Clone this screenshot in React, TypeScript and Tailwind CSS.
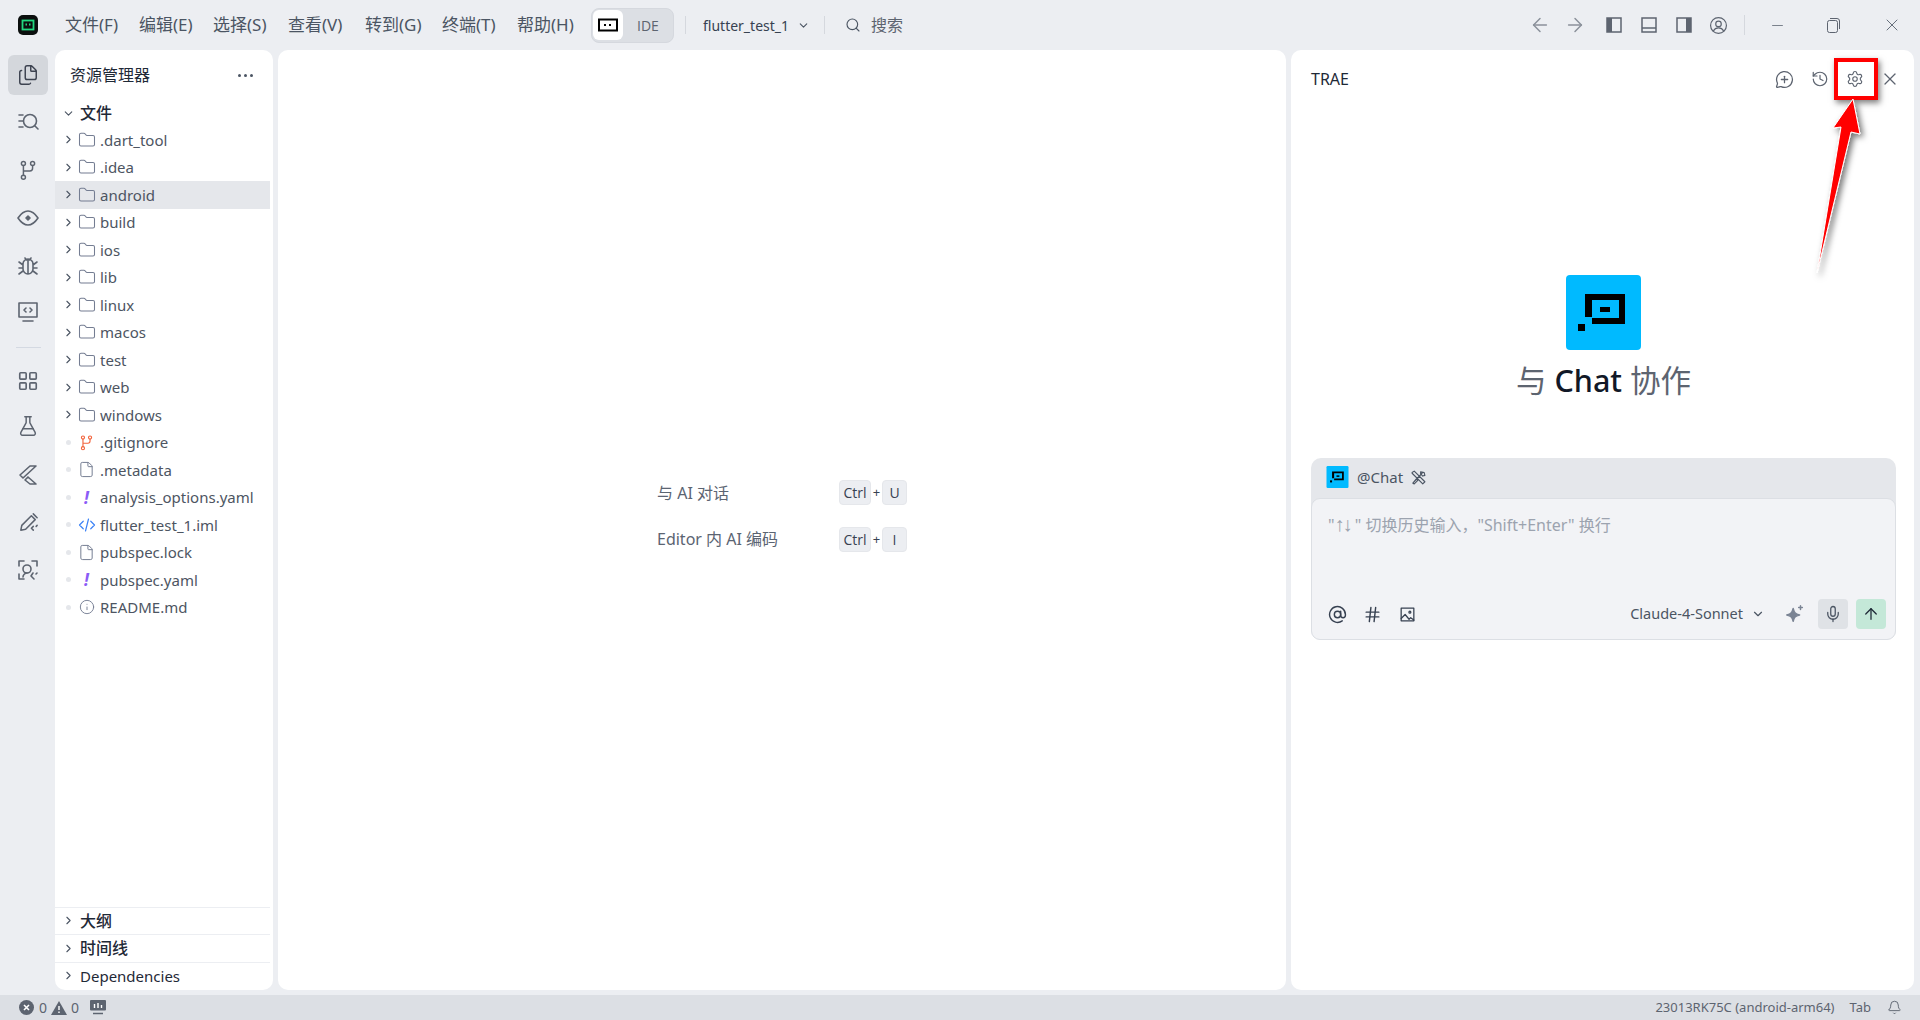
import {
  ArrowLeft,
  ArrowRight,
  ArrowUp,
  AtSign,
  Bell,
  ChevronDown,
  ChevronRight,
  File,
  Files,
  FlaskConical,
  Folder,
  Hash,
  History,
  Info,
  LayoutGrid,
  MessageCirclePlus,
  Mic,
  Minus,
  Search,
  Settings,
  X,
} from 'lucide-react';
import type { ReactNode } from 'react';

const FONT = { fontFamily: '"Noto Sans", "Noto Sans CJK SC", sans-serif' };

const menus = [
  { label: '文件(F)', w: 'w-[74px]' },
  { label: '编辑(E)', w: 'w-[74px]' },
  { label: '选择(S)', w: 'w-[75px]' },
  { label: '查看(V)', w: 'w-[77px]' },
  { label: '转到(G)', w: 'w-[77px]' },
  { label: '终端(T)', w: 'w-[75px]' },
  { label: '帮助(H)', w: 'w-[74px]' },
];
const folders = ['.dart_tool', '.idea', 'android', 'build', 'ios', 'lib', 'linux', 'macos', 'test', 'web', 'windows'];

function Svg({ size = 20, children, stroke = 1.6 }: { size?: number; children: ReactNode; stroke?: number }) {
  return (
    <svg width={size} height={size} viewBox="0 0 24 24" fill="none" stroke="currentColor" strokeWidth={stroke} strokeLinecap="round" strokeLinejoin="round">
      {children}
    </svg>
  );
}

// trae mark, drawn on the 75 unit grid of the big logo
function TraeLogo({ w, h }: { w: number; h: number }) {
  return (
    <svg width={w} height={h} viewBox="0 0 75 75">
      <rect width="75" height="75" rx="4" fill="#00baff" />
      <path d="M19 19h40v30H26v-6h27V25H26v17h-7z" fill="#000" />
      <rect x="34" y="32" width="10" height="5" fill="#000" />
      <rect x="12" y="49" width="7" height="7" fill="#000" />
    </svg>
  );
}

function ActivityBar() {
  const c = 'flex h-10 w-10 items-center justify-center rounded-md text-[#5d6470]';
  return (
    <div className="flex w-[55px] shrink-0 flex-col items-center pt-[5px] pl-[1px]">
      <div className={`${c} bg-[#d4d7dc]`}>
        <Files size={22} strokeWidth={1.6} className="text-[#3d4350]" />
      </div>
      <div className={`${c} mt-[7px]`}>
        <Svg size={24}>
          <circle cx="14" cy="11" r="6.5" />
          <path d="M19 16l3 3M3 5h4M3 11h4M3 17h4" />
        </Svg>
      </div>
      <div className={`${c} mt-[8px]`}>
        <Svg size={22}>
          <circle cx="7" cy="5" r="2.2" />
          <circle cx="17" cy="5" r="2.2" />
          <circle cx="7" cy="20" r="2.2" />
          <path d="M7 7v11M17 7v3a3 3 0 0 1-3 3H7" />
        </Svg>
      </div>
      <div className={`${c} mt-[8px]`}>
        <Svg size={24}>
          <path d="M2 12c3-4.5 6-7 10-7s7 2.500 10 7c-3 4.500-6 7-10 7s-7-2.500-10-7z" />
          <path d="M12 10l2 2-2 2-2-2z" fill="currentColor" />
        </Svg>
      </div>
      <div className={`${c} mt-[7px]`}>
        <Svg size={24}>
          <path d="M7 11a5 5 0 0 1 10 0v5a5 5 0 0 1-10 0zM12 7v14M9 5l1.500 2M15 5l-1.500 2M3 9l4 3M21 9l-4 3M3 15h4M21 15h-4M3 21l4-3M21 21l-4-3" />
        </Svg>
      </div>
      <div className={`${c} mt-[7px]`}>
        <Svg size={24}>
          <rect x="3" y="3" width="18" height="14" />
          <path d="M10 8l-2 2 2 2M14 8l2 2-2 2M7 21h10" />
        </Svg>
      </div>
      <div className="mt-[15px] h-px w-[25px] bg-[#d4d9e2]" />
      <div className={`${c} mt-[13px]`}>
        <LayoutGrid size={22} strokeWidth={1.8} />
      </div>
      <div className={`${c} mt-[5px]`}>
        <FlaskConical size={22} strokeWidth={1.6} />
      </div>
      <div className={`${c} mt-[9px]`}>
        <Svg size={24}>
          <path d="M14 3h6L7 15l-3-3zM20 21h-6l-5-4 3-3zM12 14l8 7" />
        </Svg>
      </div>
      <div className={`${c} mt-[7px]`}>
        <Svg size={23}>
          <path d="M4 20l1-5L15 5l4 4L9 19zM17 3l4 4M17 16l-2 2 2 2M21 15l-1 1" />
        </Svg>
      </div>
      <div className={`${c} mt-[8px]`}>
        <Svg size={24}>
          <path d="M3 8V3h5M16 3h5v5M3 16v5h5" />
          <circle cx="11" cy="11" r="4" />
          <path d="M7 19c0-2 2-4 4-4M17 15l-2 3 3 3M21 15l-1 1" />
        </Svg>
      </div>
    </div>
  );
}

function Row({ active, chevron = true, icon, name }: { active?: boolean; chevron?: boolean; icon: ReactNode; name: string }) {
  return (
    <div className={`mr-[3px] flex h-[27.5px] items-center pl-[5px] ${active ? 'bg-[#e5e7eb]' : ''}`}>
      <div className="flex w-[16px] justify-center">
        {chevron ? <ChevronRight size={13} strokeWidth={2} className="text-[#4b5563]" /> : <div className="h-[5px] w-[5px] rounded-full bg-[#e5e7eb]" />}
      </div>
      <div className="ml-[1.5px] flex w-[18px] justify-center">{icon}</div>
      <span className="ml-[4.5px] text-[15px] text-[#4d5562]">{name}</span>
    </div>
  );
}

function Explorer() {
  const fileIcon = <File size={17} strokeWidth={1.4} className="text-[#747d92]" />;
  const yaml = <span className="text-[17px] font-bold italic text-[#8b5cf6]">!</span>;
  return (
    <div className="flex w-[218px] shrink-0 flex-col rounded-[10px] bg-white pb-[1px]">
      <div className="flex h-[50px] shrink-0 items-center justify-between pl-[15px] pr-[20px]">
        <span className="text-[16px] text-[#1f2937]">资源管理器</span>
        <div className="flex gap-[3px]">
          <div className="h-[3px] w-[3px] rounded-full bg-[#4b5563]" />
          <div className="h-[3px] w-[3px] rounded-full bg-[#4b5563]" />
          <div className="h-[3px] w-[3px] rounded-full bg-[#4b5563]" />
        </div>
      </div>
      <div className="flex h-[26px] shrink-0 items-center pl-[5px]">
        <div className="flex w-[16px] justify-center">
          <ChevronDown size={13} strokeWidth={2} className="text-[#4b5563]" />
        </div>
        <span className="ml-[4px] text-[16px] font-medium text-[#1f2937]">文件</span>
      </div>
      <div className="flex-1">
        {folders.map(f => (
          <Row key={f} name={f} active={f === 'android'} icon={<Folder size={18} strokeWidth={1.4} className="text-[#747d92]" />} />
        ))}
        <Row
          chevron={false}
          name=".gitignore"
          icon={
            <span className="text-[#f2643d]">
              <Svg size={17}>
                <circle cx="7" cy="5" r="2.200" />
                <circle cx="17" cy="5" r="2.200" />
                <circle cx="7" cy="20" r="2.200" />
                <path d="M7 7v11M17 7v3a3 3 0 0 1-3 3H7" />
              </Svg>
            </span>
          }
        />
        <Row chevron={false} name=".metadata" icon={fileIcon} />
        <Row chevron={false} name="analysis_options.yaml" icon={yaml} />
        <Row
          chevron={false}
          name="flutter_test_1.iml"
          icon={
            <span className="text-[#3b82f6]">
              <Svg size={18}>
                <path d="M7 7l-5 5 5 5M17 7l5 5-5 5M14 4l-4 16" />
              </Svg>
            </span>
          }
        />
        <Row chevron={false} name="pubspec.lock" icon={fileIcon} />
        <Row chevron={false} name="pubspec.yaml" icon={yaml} />
        <Row chevron={false} name="README.md" icon={<Info size={16} strokeWidth={1.4} className="text-[#747d92]" />} />
      </div>
      {['大纲', '时间线', 'Dependencies'].map(s => (
        <div key={s} className="mr-[3px] flex h-[27.5px] shrink-0 items-center border-t border-[#eceef2] pl-[5px]">
          <div className="flex w-[16px] justify-center">
            <ChevronRight size={13} strokeWidth={2} className="text-[#4b5563]" />
          </div>
          <span className={`ml-[4px] text-[#1f2937] ${s === 'Dependencies' ? 'text-[15px]' : 'text-[16px] font-medium'}`}>{s}</span>
        </div>
      ))}
    </div>
  );
}

function Kbd({ children, wide }: { children: ReactNode; wide?: boolean }) {
  return (
    <span className={`flex h-[25px] items-center justify-center rounded-[4px] border border-[#e5e7eb] bg-[#eceef2] font-['Open_Sans'] text-[14px] font-medium text-[#374151] ${wide ? 'w-[32px]' : 'w-[25px]'}`}>
      {children}
    </span>
  );
}

function Hint({ label, k }: { label: string; k: string }) {
  return (
    <div className="flex items-center justify-between">
      <span className="text-[16px] text-[#5b6472]">{label}</span>
      <div className="flex items-center">
        <Kbd wide>Ctrl</Kbd>
        <span className="w-[11px] text-center text-[13px] text-[#374151]">+</span>
        <Kbd>{k}</Kbd>
      </div>
    </div>
  );
}

function ChatPanel() {
  return (
    <div className="relative w-[623px] shrink-0 rounded-[10px] bg-white">
      <div className="flex h-[58px] items-center justify-between pl-[20px] pr-[7px] text-[#5d6470]">
        <span className="text-[16px] text-[#1f2937]">TRAE</span>
        <div className="flex items-center">
          <div className="flex w-[35px] justify-center">
            <MessageCirclePlus size={19} strokeWidth={1.6} />
          </div>
          <div className="flex w-[35px] justify-center">
            <History size={18} strokeWidth={1.6} />
          </div>
          <div className="flex w-[35px] justify-center">
            <Settings size={18} strokeWidth={1.5} />
          </div>
          <div className="flex w-[35px] justify-center">
            <X size={20} strokeWidth={1.5} />
          </div>
        </div>
      </div>

      <div className="ml-[20px] flex w-[585px] flex-col items-center">
        <div className="mt-[167px]">
          <TraeLogo w={75} h={75} />
        </div>
        <div className="mt-[10px] text-[30.5px] leading-[40px] text-[#5d6470]">
          与 <span className="font-medium text-[#111827]">Chat</span> 协作
        </div>

        <div className="mt-[58px] w-full rounded-[10px] bg-[#e5e7eb]">
          <div className="flex h-[40px] items-center pb-[2px] pl-[15px]">
            <TraeLogo w={23} h={22} />
            <span className="ml-[8px] text-[15px] text-[#4b5563]">@Chat</span>
            <span className="ml-[7px] text-[#4b5563]">
              <Svg size={17}>
                <path d="M4 20L17 6M3 5l3-2 15 15-3 3L3 6zM15 4l5 1 1 4-3 1-3-3zM4 20l2 1 5-5-2-2z" />
              </Svg>
            </span>
          </div>
          <div className="flex h-[142px] flex-col rounded-[9px] border border-[#dcdfe4] bg-[#f2f3f6]">
            <div className="pl-[16px] pt-[15px] text-[16px] leading-[20px] text-[#9ca3af]">
              "<span className="font-['Liberation_Sans'] text-[20px] leading-[20px] tracking-[-2px]">↑↓</span>&nbsp;" 切换历史输入，"Shift+Enter" 换行
            </div>
            <div className="mt-auto flex items-center pb-[10px] pl-[16px] pr-[9px] text-[#374151]">
              <AtSign size={19} strokeWidth={1.8} />
              <Hash size={19} strokeWidth={1.8} className="ml-[16px]" />
              <div className="ml-[16px]">
                <Svg size={19}>
                  <rect x="4" y="4" width="16" height="16" />
                  <circle cx="15" cy="9" r="1.200" />
                  <path d="M4 17l5-5 5 6 2-2 4 3" />
                </Svg>
              </div>
              <span className="ml-auto text-[14.5px] text-[#4b5563]">Claude-4-Sonnet</span>
              <ChevronDown size={14} strokeWidth={2} className="ml-[8px] text-[#4b5563]" />
              <span className="ml-[19px] mr-[12px] text-[#7b8494]">
                <Svg size={22}>
                  <path d="M10 6c1 4 2 6 7 7-5 1-6 3-7 7-1-4-2-6-7-7 5-1 6-3 7-7z" fill="currentColor" />
                  <path d="M18 3v4M16 5h4" />
                </Svg>
              </span>
              <div className="flex h-[30px] w-[30px] items-center justify-center rounded-[4px] bg-[#dfe2e6]">
                <Mic size={18} strokeWidth={1.7} className="text-[#4b5563]" />
              </div>
              <div className="ml-[8px] flex h-[30px] w-[30px] items-center justify-center rounded-[4px] bg-[#c4e8d8]">
                <ArrowUp size={18} strokeWidth={1.7} className="text-[#1f2937]" />
              </div>
            </div>
          </div>
        </div>
      </div>

      {/* red callout drawn on top of the screenshot */}
      <div className="absolute left-[543px] top-[8px] h-[42px] w-[44px] border-[4px] border-[#f00] shadow-[2px_3px_6px_rgba(0,0,0,0.5)]" />
      <svg className="absolute left-[516px] top-[40px] overflow-visible" width="60" height="190" viewBox="0 0 60 190">
        <defs>
          <filter id="arrowShadow" x="-50%" y="-20%" width="200%" height="140%">
            <feDropShadow dx="3" dy="3" stdDeviation="3" floodColor="#000" floodOpacity="0.55" />
          </filter>
        </defs>
        <path d="M46 9L26 38l8-1L10 183 44 42l9 2z" fill="#f00" stroke="#fff" strokeWidth="1" filter="url(#arrowShadow)" />
      </svg>
    </div>
  );
}

function PanelIcon({ part }: { part: 'left' | 'bottom' | 'right' }) {
  return (
    <svg width="16" height="16" viewBox="0 0 16 16">
      <rect x="1" y="1" width="14" height="14" fill="none" stroke="#5d6470" strokeWidth="1.500" />
      {part === 'left' && <rect x="1" y="1" width="5" height="14" fill="#5d6470" />}
      {part === 'right' && <rect x="10" y="1" width="5" height="14" fill="#5d6470" />}
      {part === 'bottom' && <path d="M1 11h14" stroke="#5d6470" strokeWidth="1.500" />}
    </svg>
  );
}

export default function App() {
  return (
    <div className="flex h-[1020px] w-[1920px] flex-col overflow-hidden bg-[#eceef2]" style={FONT}>
      {/* title bar */}
      <div className="flex h-[50px] shrink-0 items-center pl-[18px] text-[#4b5563]">
        <svg width="20" height="20" viewBox="0 0 20 20">
          <rect width="20" height="20" rx="5" fill="#0b0f0e" />
          <rect x="4.500" y="5.500" width="11" height="9" fill="none" stroke="#22d67f" strokeWidth="1.800" />
          <rect x="7.500" y="8.500" width="1.500" height="2" fill="#22d67f" />
          <rect x="11" y="8.500" width="1.500" height="2" fill="#22d67f" />
        </svg>
        <div className="ml-[27px] flex">
          {menus.map(m => (
            <span key={m.label} className={`${m.w} whitespace-nowrap text-[17px] text-[#4b5563]`}>
              {m.label}
            </span>
          ))}
        </div>
        <div className="flex h-[35px] w-[83px] items-center rounded-[8px] border border-[#d5d8de] bg-[#dcdfe4] p-[1px]">
          <div className="flex h-[30px] w-[30px] items-center justify-center rounded-[6px] bg-white">
            <svg width="20" height="14" viewBox="0 0 20 14">
              <rect x="1" y="1.500" width="18" height="11" fill="none" stroke="#000" strokeWidth="2" />
              <rect x="6" y="6" width="2" height="2" fill="#000" />
              <rect x="11" y="6" width="2" height="2" fill="#000" />
            </svg>
          </div>
          <span className="ml-[14px] font-['Open_Sans'] text-[14px] text-[#5d6470]">IDE</span>
        </div>
        <div className="ml-[11px] h-[18px] w-px bg-[#d5d8de]" />
        <span className="ml-[17px] text-[14px] text-[#374151]">flutter_test_1</span>
        <ChevronDown size={13} strokeWidth={2} className="ml-[8px] text-[#4b5563]" />
        <div className="ml-[14px] h-[18px] w-px bg-[#d5d8de]" />
        <Search size={16} strokeWidth={1.7} className="ml-[20px] text-[#4b5563]" />
        <span className="ml-[10px] text-[16px] text-[#5d6470]">搜索</span>

        <div className="ml-auto flex items-center">
          <div className="flex w-[35px] justify-center text-[#8a909a]">
            <ArrowLeft size={22} strokeWidth={1.6} />
          </div>
          <div className="flex w-[35px] justify-center text-[#8a909a]">
            <ArrowRight size={22} strokeWidth={1.6} />
          </div>
          <div className="ml-[4px] flex w-[35px] justify-center">
            <PanelIcon part="left" />
          </div>
          <div className="flex w-[35px] justify-center">
            <PanelIcon part="bottom" />
          </div>
          <div className="flex w-[35px] justify-center">
            <PanelIcon part="right" />
          </div>
          <div className="flex w-[35px] justify-center text-[#5d6470]">
            <Svg size={19} stroke={1.5}>
              <circle cx="12" cy="12" r="10" />
              <circle cx="12" cy="10" r="3.500" />
              <path d="M5.500 19c1.500-3 4-4 6.500-4s5 1 6.500 4" />
            </Svg>
          </div>
          <div className="ml-[8px] h-[20px] w-px bg-[#d5d8de]" />
          <div className="ml-[4px] flex w-[56px] justify-center">
            <Minus size={17} strokeWidth={1} />
          </div>
          <div className="flex w-[56px] justify-center">
            <svg width="15" height="16" viewBox="0 0 15 16" fill="none" stroke="#5d6470">
              <rect x="1.500" y="3.500" width="10" height="12" rx="2" />
              <path d="M4 1.500h7a2.500 2.500 0 0 1 2.500 2.500v8" />
            </svg>
          </div>
          <div className="ml-[3px] flex w-[56px] justify-center">
            <X size={20} strokeWidth={1} />
          </div>
        </div>
      </div>

      {/* workspace */}
      <div className="flex h-[940px] shrink-0">
        <ActivityBar />
        <Explorer />
        <div className="mx-[5px] flex w-[1008px] shrink-0 items-center justify-center rounded-[10px] bg-white pb-[8px]">
          <div className="flex w-[250px] flex-col gap-[21.5px]">
            <Hint label="与 AI 对话" k="U" />
            <Hint label="Editor 内 AI 编码" k="I" />
          </div>
        </div>
        <ChatPanel />
      </div>

      {/* status bar */}
      <div className="mt-[5px] flex h-[25px] shrink-0 items-center bg-[#dcdfe4] pl-[19px] text-[14px] text-[#5d6470]">
        <svg width="15" height="15" viewBox="0 0 15 15">
          <circle cx="7.500" cy="7.500" r="7.500" fill="#5d6470" />
          <path d="M5 5l5 5M10 5l-5 5" stroke="#fff" strokeWidth="1.600" />
        </svg>
        <span className="ml-[5px]">0</span>
        <svg className="ml-[4px]" width="16" height="14" viewBox="0 0 16 14">
          <path d="M8 0l8 14H0z" fill="#5d6470" />
          <path d="M8 5v4M8 10.500v1.500" stroke="#fff" strokeWidth="1.400" />
        </svg>
        <span className="ml-[4px]">0</span>
        <svg className="ml-[11px]" width="16" height="15" viewBox="0 0 16 15">
          <rect width="16" height="10.500" rx="1" fill="#5d6470" />
          <path d="M4.500 4v4M8 3v5M11.500 5v3" stroke="#fff" strokeWidth="1.400" />
          <path d="M3 13.500h10" stroke="#5d6470" strokeWidth="1.500" />
        </svg>
        <span className="ml-auto text-[13px]">23013RK75C (android-arm64)</span>
        <span className="ml-[15px] text-[13px]">Tab</span>
        <Bell size={15} strokeWidth={1.5} className="ml-[16px] mr-[18px]" />
      </div>
    </div>
  );
}
